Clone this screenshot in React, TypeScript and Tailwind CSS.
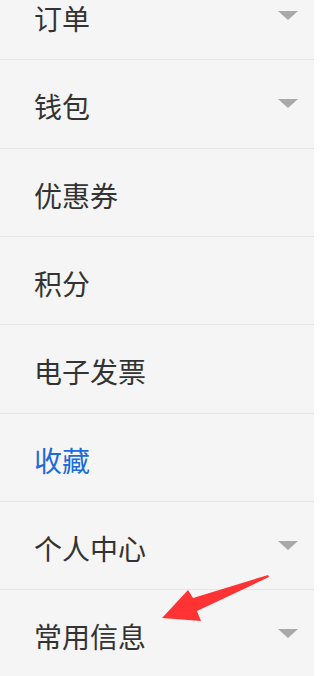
// Sidebar menu — account section list with an annotation arrow.
const items: { label: string; caret?: boolean; active?: boolean }[] = [
  { label: '订单', caret: true },
  { label: '钱包', caret: true },
  { label: '优惠券' },
  { label: '积分' },
  { label: '电子发票' },
  { label: '收藏', active: true },
  { label: '个人中心', caret: true },
  { label: '常用信息', caret: true },
];

function Caret() {
  return (
    <svg width="20" height="9" viewBox="0 0 20 9" className="block">
      <polygon points="0,0 20,0 10,9" fill="#a9a9a9" />
    </svg>
  );
}

export default function App() {
  return (
    <div
      className="relative h-[676px] w-[314px] overflow-hidden bg-[#f5f5f5]"
      style={{ fontFamily: '"Noto Sans CJK SC", "Noto Sans", sans-serif' }}
    >
      <ul className="-mt-[28px]">
        {items.map((it) => (
          <li
            key={it.label}
            className="flex h-[88.33px] items-center justify-between border-b border-[#e6e6e6] pl-[34px] pr-[16px]"
          >
            <span
              className={`pt-[5px] text-[28px] leading-none ${
                it.active ? 'text-[#1d6bd8]' : 'text-[#333333]'
              }`}
            >
              {it.label}
            </span>
            {it.caret && <Caret />}
          </li>
        ))}
      </ul>
      <svg
        className="pointer-events-none absolute left-0 top-0"
        width="314"
        height="676"
        viewBox="0 0 314 676"
      >
        <polygon
          points="268,575 193,598 188,590 162,618 201,621 197,611 269,577"
          fill="#ff3333"
        />
      </svg>
    </div>
  );
}
